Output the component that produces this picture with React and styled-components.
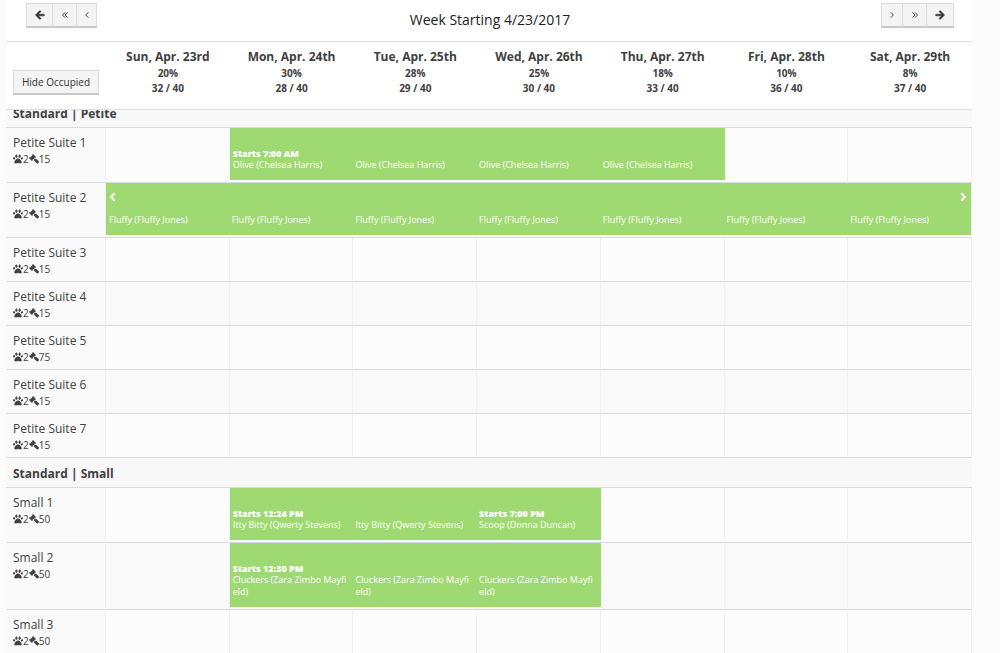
import React from "react";
import styled, { createGlobalStyle, css } from "styled-components";
import { FaArrowLeft, FaArrowRight, FaPaw } from "react-icons/fa";

const GlobalStyle = createGlobalStyle`
  * { box-sizing: border-box; }
  body {
    margin: 0;
    background: #fbfbfb;
    color: #404040;
    font-family: "Open Sans", "Noto Sans", sans-serif;
    font-size: 12px;
  }
`;

const Page = styled.main`
  padding: 0 28px 0 6px;
`;

const Toolbar = styled.header`
  display: grid;
  grid-template-columns: 1fr auto 1fr;
  align-items: start;
  height: 42px;
  padding: 3px 18px 0 20px;
  background: #fff;
  border-bottom: 1px solid #e0e0e0;
`;

const Title = styled.h1`
  margin: 0;
  padding-top: 7px;
  font-size: 14px;
  line-height: 20px;
  font-weight: 400;
  color: #222;
`;

const ButtonGroup = styled.div`
  display: flex;
  justify-self: ${(p) => (p.$end ? "end" : "start")};
`;

const buttonFace = css`
  background: #f4f4f4;
  border: 1px solid #dcdcdc;
  border-bottom: 2px solid #c8c8c8;
  color: #333;
  font-family: inherit;
  cursor: pointer;
`;

const NavButton = styled.button`
  ${buttonFace}
  display: flex;
  align-items: center;
  justify-content: center;
  width: ${(p) => p.$width}px;
  height: 25px;
  padding: 0;
  & + & { border-left: 0; }
`;

const OccupiedButton = styled.button`
  ${buttonFace}
  width: 86px;
  height: 25px;
  padding: 0;
  font-size: 10px;
  line-height: 20px;
`;

const Schedule = styled.table`
  width: 100%;
  table-layout: fixed;
  border-collapse: separate;
  border-spacing: 0;
`;

const LabelColumn = styled.col`
  width: 100px;
`;

const CornerCell = styled.td`
  height: 68px;
  padding: 28px 0 0 7px;
  vertical-align: top;
  background: #fff;
  border-bottom: 1px solid #e0e0e0;
`;

const DayHeader = styled.th`
  padding: 6px 0 0;
  vertical-align: top;
  text-align: center;
  background: #fff;
  border-bottom: 1px solid #e0e0e0;
`;

const DayName = styled.div`
  font-size: 12px;
  line-height: 18px;
`;

const DayStat = styled.div`
  font-size: 10px;
  line-height: 15px;
`;

const SectionHeader = styled.th`
  padding: 0 0 0 7px;
  text-align: left;
  background: #f8f8f8;
  border-bottom: 1px solid #dcdcdc;
`;

const SectionClip = styled.div`
  display: flex;
  align-items: flex-end;
  height: ${(p) => (p.$tucked ? 17 : 29)}px;
  overflow: hidden;
`;

const SectionName = styled.span`
  flex: none;
  font-size: 12px;
  line-height: 27px;
`;

const Row = styled.tr`
  height: 44px;
  background: ${(p) => (p.$shaded ? "#f9f9f9" : "#fcfcfc")};
`;

const SuiteCell = styled.th`
  padding: 6px 0 0 7px;
  vertical-align: top;
  text-align: left;
  font-weight: 400;
  background: #fafafa;
  border-right: 1px solid #f0f0f0;
  border-bottom: 1px solid #dcdcdc;
`;

const SuiteName = styled.div`
  font-size: 12px;
  line-height: 18px;
`;

const SuiteMeta = styled.div`
  display: flex;
  align-items: center;
  font-size: 10px;
  line-height: 14px;
`;

const DayCell = styled.td`
  padding: 0 0 2px;
  vertical-align: top;
  border-right: ${(p) => (p.$joined ? "0" : "1px solid #f0f0f0")};
  border-bottom: 1px solid #dcdcdc;
`;

const Booking = styled.div`
  padding: 0 4px 9px ${(p) => (p.$first ? 3 : 2)}px;
  background: #9fd971;
  color: #fff;
  font-size: 9px;
`;

const BookingTop = styled.div`
  display: flex;
  align-items: flex-end;
  justify-content: ${(p) => (p.$end ? "flex-end" : "flex-start")};
  height: 21px;
  padding-bottom: 2px;
`;

const BookingStart = styled.div`
  height: 10px;
  line-height: 10px;
  font-weight: 800;
`;

const BookingName = styled.div`
  line-height: 12px;
  word-break: break-all;
`;

const Angle = ({ right, double }) => (
  <svg width="8" height="8" viewBox="0 0 8 8" fill="none" stroke="#444" strokeWidth="1" aria-hidden="true">
    <g transform={right ? "translate(8 0) scale(-1 1)" : undefined}>
      {double ? (
        <path d="M4 1.4 1.500 4 4 6.600M6.500 1.400 4 4 6.500 6.600" />
      ) : (
        <path d="M5.2 1.4 2.700 4l2.500 2.600" />
      )}
    </g>
  </svg>
);

const Chevron = ({ right }) => (
  <svg width="7" height="10" viewBox="0 0 7 10" fill="none" stroke="#fff" strokeWidth="2" aria-hidden="true">
    <path d={right ? "M1.3 1.3 5 5 1.3 8.7" : "M5.7 1.3 2 5l3.7 3.7"} />
  </svg>
);

const Gavel = () => (
  <svg width="10" height="10" viewBox="0 0 20 20" fill="currentColor" aria-hidden="true">
    <path d="M0 8 1.800 6.200l.9.5L6.700 2.700 6.200 1.800 8 0l6 6-1.800 1.800-.9-.5-1 1 2 2 1.400-1.400 5.800 5.800c.7.7.7 1.700 0 2.400l-1.600 1.600c-.7.7-1.700.7-2.400 0l-5.800-5.800 1.200-1.200-2-2-1.600 1.600.5.9L6 14z" />
  </svg>
);

const days = [
  ["Sun, Apr. 23rd", "20%", "32 / 40"],
  ["Mon, Apr. 24th", "30%", "28 / 40"],
  ["Tue, Apr. 25th", "28%", "29 / 40"],
  ["Wed, Apr. 26th", "25%", "30 / 40"],
  ["Thu, Apr. 27th", "18%", "33 / 40"],
  ["Fri, Apr. 28th", "10%", "36 / 40"],
  ["Sat, Apr. 29th", "8%", "37 / 40"],
];

const olive = { name: "Olive (Chelsea Harris)" };
const fluffy = { name: "Fluffy (Fluffy Jones)" };
const itty = { name: "Itty Bitty (Qwerty Stevens)" };
const cluckers = { name: "Cluckers (Zara Zimbo Mayfield)" };

const sections = [
  {
    name: "Standard | Petite",
    tucked: true,
    suites: [
      { name: "Petite Suite 1", rate: 15, stays: { 1: { ...olive, starts: "7:00 AM" }, 2: olive, 3: olive, 4: olive } },
      {
        name: "Petite Suite 2",
        rate: 15,
        stays: {
          0: { ...fluffy, before: true },
          1: fluffy, 2: fluffy, 3: fluffy, 4: fluffy, 5: fluffy,
          6: { ...fluffy, after: true },
        },
      },
      { name: "Petite Suite 3", rate: 15 },
      { name: "Petite Suite 4", rate: 15 },
      { name: "Petite Suite 5", rate: 75 },
      { name: "Petite Suite 6", rate: 15 },
      { name: "Petite Suite 7", rate: 15 },
    ],
  },
  {
    name: "Standard | Small",
    suites: [
      {
        name: "Small 1",
        rate: 50,
        stays: { 1: { ...itty, starts: "12:24 PM" }, 2: itty, 3: { name: "Scoop (Donna Duncan)", starts: "7:00 PM" } },
      },
      { name: "Small 2", rate: 50, stays: { 1: { ...cluckers, starts: "12:30 PM" }, 2: cluckers, 3: cluckers } },
      { name: "Small 3", rate: 50 },
    ],
  },
];

const BookingCell = ({ stay, first, joined }) => (
  <DayCell $joined={joined}>
    {stay && (
      <Booking $first={first}>
        <BookingTop $end={stay.after}>
          {stay.before && <Chevron />}
          {stay.after && <Chevron right />}
        </BookingTop>
        <BookingStart>{stay.starts && `Starts ${stay.starts}`}</BookingStart>
        <BookingName>{stay.name}</BookingName>
      </Booking>
    )}
  </DayCell>
);

const SuiteRow = ({ suite, shaded }) => {
  const stays = suite.stays || {};
  return (
    <Row $shaded={shaded}>
      <SuiteCell scope="row">
        <SuiteName>{suite.name}</SuiteName>
        <SuiteMeta>
          <FaPaw size={10} aria-hidden="true" />
          <span>2</span>
          <Gavel />
          <span>{suite.rate}</span>
        </SuiteMeta>
      </SuiteCell>
      {days.map(([day], i) => (
        <BookingCell key={day} stay={stays[i]} first={!stays[i - 1]} joined={Boolean(stays[i] && (stays[i + 1] || i < 6))} />
      ))}
    </Row>
  );
};

export default function App() {
  return (
    <Page>
      <GlobalStyle />
      <Toolbar>
        <ButtonGroup>
          <NavButton $width={27} aria-label="Previous month"><FaArrowLeft size={10} stroke="currentColor" strokeWidth={30} /></NavButton>
          <NavButton $width={24} aria-label="Previous week"><Angle double /></NavButton>
          <NavButton $width={20} aria-label="Previous day"><Angle /></NavButton>
        </ButtonGroup>
        <Title>Week Starting 4/23/2017</Title>
        <ButtonGroup $end>
          <NavButton $width={22} aria-label="Next day"><Angle right /></NavButton>
          <NavButton $width={24} aria-label="Next week"><Angle right double /></NavButton>
          <NavButton $width={27} aria-label="Next month"><FaArrowRight size={10} stroke="currentColor" strokeWidth={30} /></NavButton>
        </ButtonGroup>
      </Toolbar>
      <Schedule>
        <colgroup>
          <LabelColumn />
          {days.map(([day]) => <col key={day} />)}
        </colgroup>
        <thead>
          <tr>
            <CornerCell><OccupiedButton>Hide Occupied</OccupiedButton></CornerCell>
            {days.map(([day, percent, count]) => (
              <DayHeader key={day} scope="col">
                <DayName>{day}</DayName>
                <DayStat>{percent}</DayStat>
                <DayStat>{count}</DayStat>
              </DayHeader>
            ))}
          </tr>
        </thead>
        {sections.map((section) => (
          <tbody key={section.name}>
            <tr>
              <SectionHeader colSpan={8} scope="colgroup">
                <SectionClip $tucked={section.tucked}>
                  <SectionName>{section.name}</SectionName>
                </SectionClip>
              </SectionHeader>
            </tr>
            {section.suites.map((suite, i) => (
              <SuiteRow key={suite.name} suite={suite} shaded={i % 2 === 1} />
            ))}
          </tbody>
        ))}
      </Schedule>
    </Page>
  );
}
